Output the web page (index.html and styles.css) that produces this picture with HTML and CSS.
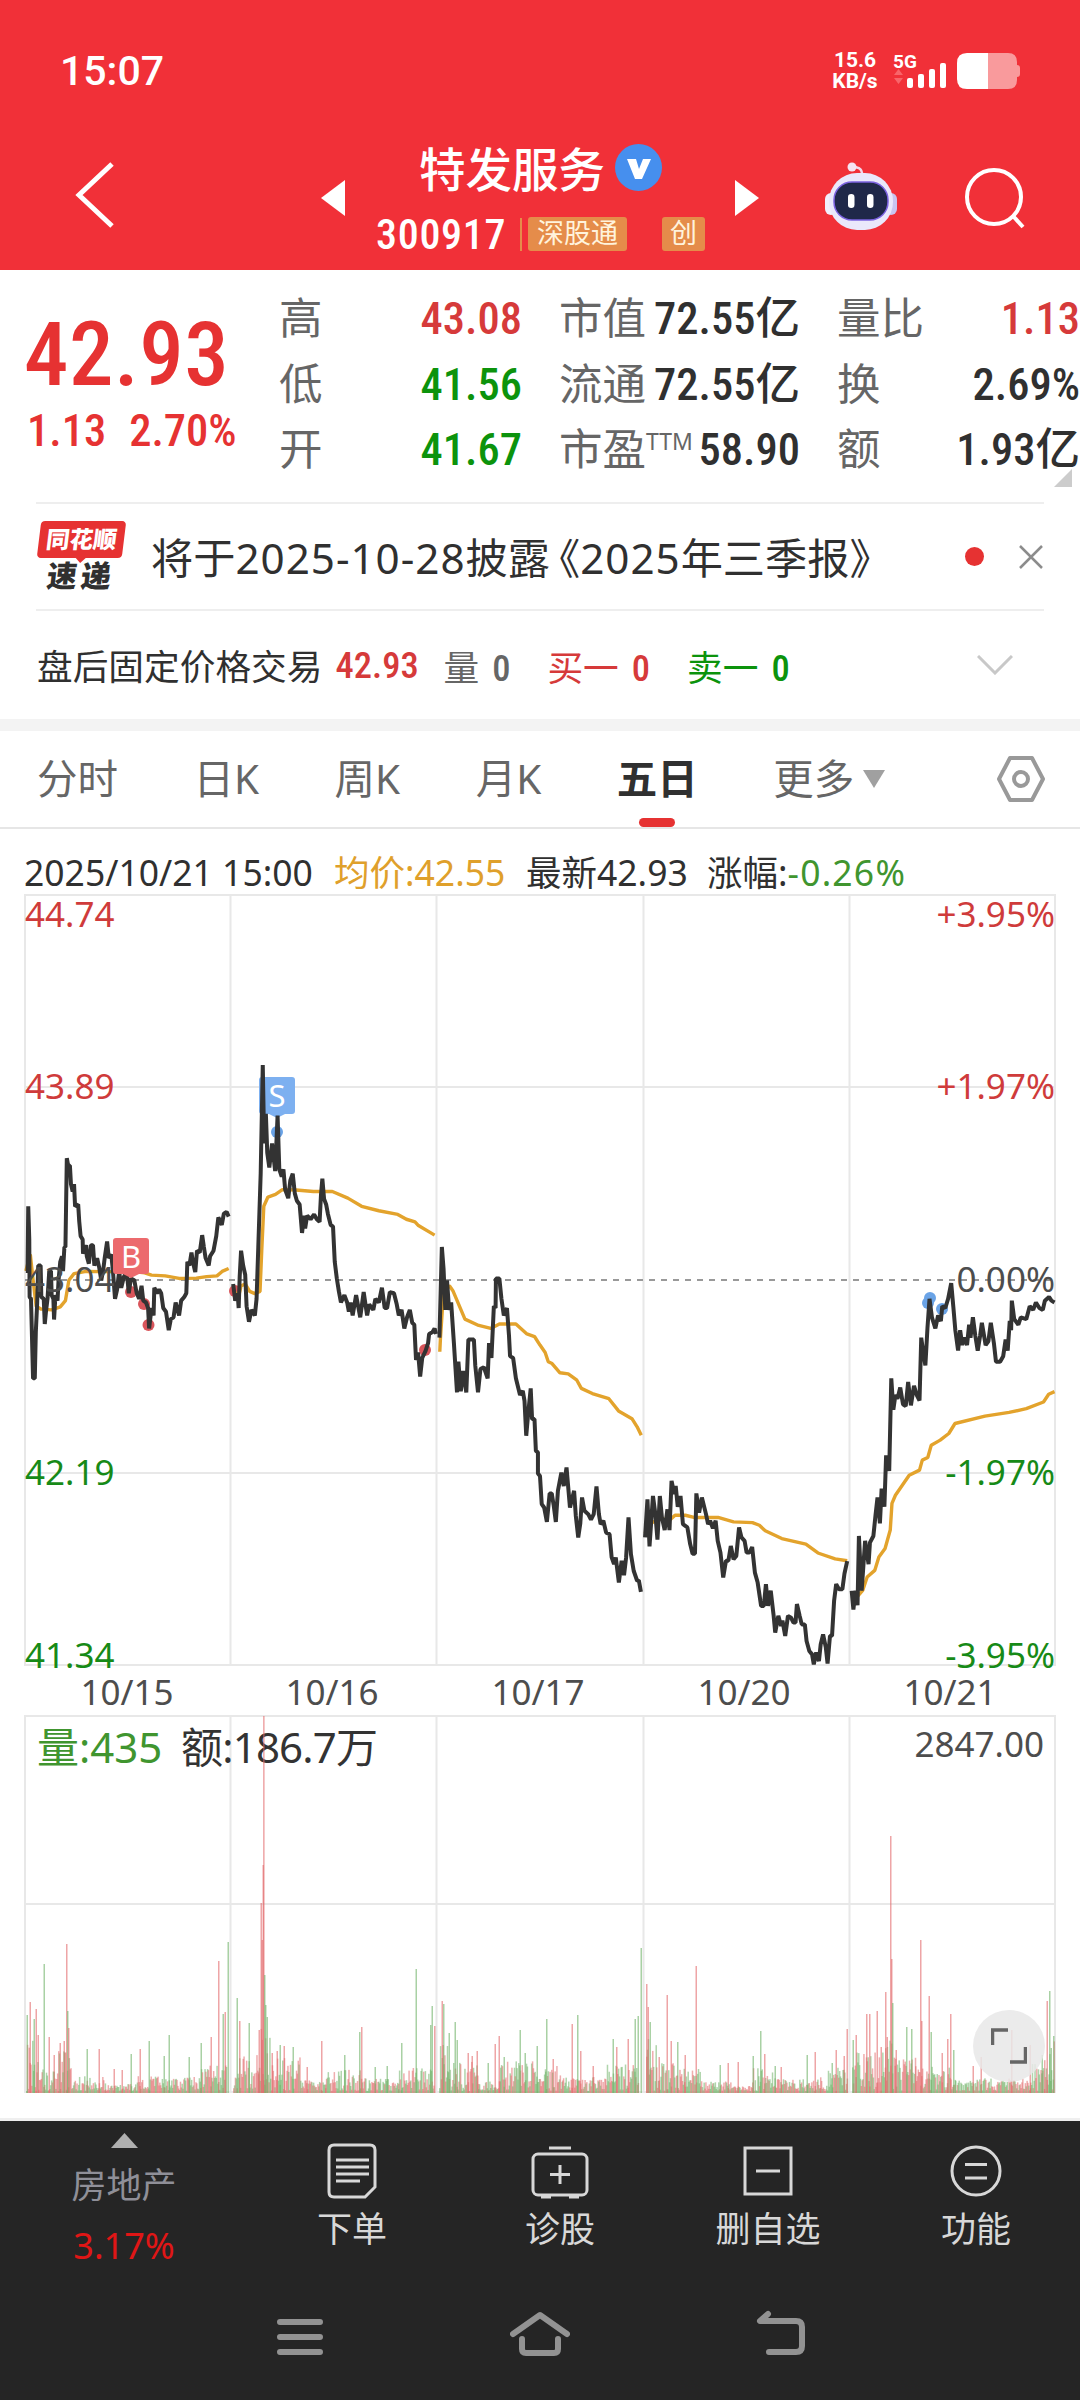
FILE: index.html
```html
<!DOCTYPE html>
<html lang="zh-CN">
<head>
    <meta charset="UTF-8">
    <meta name="viewport" content="width=device-width, initial-scale=1.0">
    <title>特发服务 300917</title>
    <link rel="stylesheet" href="styles.css">
</head>
<body>

<header class="header">
    <div class="status-bar">
        <span class="clock">15:07</span>
        <div class="status-right">
            <div class="net-speed"><span>15.6</span><span>KB/s</span></div>
            <div class="signal">
                <span class="signal-type">5G</span>
                <svg width="54" height="26" viewBox="0 0 54 26">
                    <path d="M1 12l4.500-6 4.500 6zM1 15l4.500 6 4.500-6z" fill="#f8656a"/>
                    <g fill="#fff">
                        <rect x="14" y="15" width="6" height="10" rx="2"/>
                        <rect x="25" y="11" width="6" height="14" rx="2"/>
                        <rect x="36" y="6" width="6" height="19" rx="2"/>
                        <rect x="47" y="0" width="6" height="25" rx="2"/>
                    </g>
                </svg>
            </div>
            <svg class="battery" width="64" height="36" viewBox="0 0 64 36">
                <path d="M31 0h20q9 0 9 9v3q3 0 3 3v6q0 3-3 3v3q0 9-9 9H31z" fill="#f99a9c"/>
                <path d="M31 0H10Q0 0 0 10v16q0 10 10 10h21z" fill="#fff"/>
            </svg>
        </div>
    </div>

    <div class="title-bar">
        <svg class="back" width="40" height="68" viewBox="0 0 40 68">
            <path d="M37 3L4 34l33 31" fill="none" stroke="#fff" stroke-width="5"/>
        </svg>
        <svg class="prev" width="24" height="36"><path d="M24 0v36L0 18z" fill="#fff"/></svg>
        <div class="stock">
            <div class="stock-name">
                特发服务
                <svg width="47" height="47" viewBox="0 0 47 47">
                    <circle cx="23.500" cy="23.500" r="23.500" fill="#468fee"/>
                    <path d="M12 15h9l3 10 4-10h8l-9 20h-7z" fill="#fff"/>
                </svg>
            </div>
            <div class="stock-code">
                <span class="num">300917</span>
                <i class="sep"></i>
                <span class="tag">深股通</span>
                <span class="tag tag-cyb">创</span>
            </div>
        </div>
        <svg class="next" width="24" height="36"><path d="M0 0v36l24-18z" fill="#fff"/></svg>
        <svg class="robot" width="74" height="70" viewBox="0 0 74 70">
            <path d="M38 14C39 5 32 5 28 5" fill="none" stroke="#f3d8ea" stroke-width="2.500"/>
            <circle cx="28" cy="5" r="4.500" fill="#f6e3f2"/>
            <rect x="1" y="31" width="12" height="22" rx="6" fill="#f1effc"/>
            <rect x="61" y="31" width="12" height="22" rx="6" fill="#c9c5f0"/>
            <rect x="5" y="11" width="64" height="57" rx="28" fill="#eae8fb"/>
            <rect x="10" y="20" width="54" height="38" rx="18" fill="#1f2849" stroke="#7b62e0" stroke-width="1.500"/>
            <rect x="24" y="32" width="6.500" height="14" rx="3.200" fill="#fff"/>
            <rect x="43" y="32" width="6.500" height="14" rx="3.200" fill="#fff"/>
        </svg>
        <svg class="search" width="62" height="62" viewBox="0 0 62 62">
            <circle cx="29" cy="29" r="27" fill="none" stroke="#fff" stroke-width="4"/>
            <path d="M48 48l10 11" stroke="#fff" stroke-width="4"/>
        </svg>
    </div>
</header>

<section class="quote">
    <div class="price-box">
        <div class="price num">42.93</div>
        <div class="change num"><span>1.13</span><span>2.70%</span></div>
    </div>
    <div class="stats">
        <div class="stat"><span>高</span><b class="num up">43.08</b></div>
        <div class="stat"><span>市值</span><b class="num">72.55亿</b></div>
        <div class="stat"><span>量比</span><b class="num up">1.13</b></div>
        <div class="stat"><span>低</span><b class="num down">41.56</b></div>
        <div class="stat"><span>流通</span><b class="num">72.55亿</b></div>
        <div class="stat"><span>换</span><b class="num">2.69%</b></div>
        <div class="stat"><span>开</span><b class="num down">41.67</b></div>
        <div class="stat"><span>市盈<sup>TTM</sup></span><b class="num">58.90</b></div>
        <div class="stat"><span>额</span><b class="num">1.93亿</b></div>
    </div>
    <svg class="corner" width="18" height="18"><path d="M18 0v18H0z" fill="#ccc"/></svg>
</section>

<section class="news">
    <div class="news-logo">
        <span class="logo-top">同花顺</span>
        <span class="logo-bottom">速递</span>
    </div>
    <span class="news-text">将于<span class="date">2025-10-28</span>披露<span class="book">《</span><span class="date">2025</span>年三季报》</span>
    <i class="dot"></i>
    <svg width="24" height="24" viewBox="0 0 24 24"><path d="M1 1l22 22M23 1L1 23" stroke="#8c8c8c" stroke-width="2.500"/></svg>
</section>

<section class="after-hours">
    <span class="ah-title">盘后固定价格交易</span>
    <b class="num up ah-price">42.93</b>
    <span class="ah-item gray">量<b class="num">0</b></span>
    <span class="ah-item up">买一<b class="num">0</b></span>
    <span class="ah-item down">卖一<b class="num">0</b></span>
    <svg class="fold" width="36" height="20" viewBox="0 0 36 20"><path d="M1 1l17 17L35 1" fill="none" stroke="#c8c8c8" stroke-width="3"/></svg>
</section>

<nav class="tabs">
    <span class="tab">分时</span>
    <span class="tab">日K</span>
    <span class="tab">周K</span>
    <span class="tab">月K</span>
    <span class="tab active">五日</span>
    <span class="tab">更多<svg width="22" height="18"><path d="M0 0h22L11 18z" fill="#a0a0a0"/></svg></span>
    <svg class="setting" width="50" height="48" viewBox="0 0 50 48">
        <path d="M14 3h22l11 21-11 21H14L3 24z" fill="none" stroke="#999" stroke-width="4" stroke-linejoin="round"/>
        <circle cx="25" cy="24" r="7" fill="none" stroke="#999" stroke-width="4"/>
    </svg>
</nav>

<section class="legend">
    <span class="lg-time">2025/10/21 15:00</span>
    <span class="lg-avg">均价:42.55</span>
    <span class="lg-last">最新42.93</span>
    <span>涨幅:<em>-0.26%</em></span>
</section>

<section class="charts">
    <svg class="chart" width="1080" height="1226" viewBox="0 892 1080 1226">
        <g class="grid">
            <path d="M24 895H1056M24 1087H1056M24 1473H1056M24 1665H1056"/>
            <path d="M25 895V1665M230.500 895V1665M436.500 895V1665M643.500 895V1665M849.500 895V1665M1055 895V1665"/>
            <path d="M24 1716H1056M24 1904H1056M24 2092H1056"/>
            <path d="M25 1716V2092M230.500 1716V2092M436.500 1716V2092M643.500 1716V2092M849.500 1716V2092M1055 1716V2092"/>
        </g>
        <path class="base-line" d="M25 1280H1055"/>

        <!-- buy points under the price line -->
        <g fill="#d9555b">
            <circle cx="131" cy="1292" r="6"/>
            <circle cx="144" cy="1304" r="6"/>
            <circle cx="148.500" cy="1325" r="6"/>
            <circle cx="235" cy="1291" r="6"/>
            <circle cx="425" cy="1350" r="6"/>
        </g>
        <!-- sell points -->
        <g fill="#6aa3e6">
            <circle cx="277" cy="1132" r="6"/>
            <circle cx="930" cy="1298" r="6"/>
            <circle cx="928" cy="1303" r="6"/>
            <circle cx="942" cy="1309" r="6"/>
        </g>
        <path d="M262 1077h30q3 0 3 3v31q0 3-3 3h-7l-8 4-8-4h-7q-3 0-3-3v-31q0-3 3-3z" fill="#7db0f0"/>

        <g transform="translate(0 840) scale(.34439 .37)">
            <g class="avg-line">
                <polyline points="75,1165 88,1120 95,1180 105,1260 120,1268 150,1270 175,1262 190,1245 200,1190 215,1172 250,1166 400,1168 420,1170 440,1176 480,1178 520,1185 570,1184 600,1180 630,1178 645,1166 664,1158"/>
                <polyline points="677,1225 695,1225 700,1205 712,1200 725,1220 740,1226 755,1220 760,1110 766,990 778,965 800,958 820,945 860,946 910,950 965,950 1010,968 1050,990 1100,1002 1155,1012 1180,1025 1205,1032 1215,1042 1262,1068"/>
                <polyline points="1277,1383 1279,1345 1288,1220 1305,1205 1315,1218 1350,1295 1390,1312 1425,1320 1450,1308 1498,1308 1530,1335 1552,1342 1568,1365 1583,1385 1592,1410 1603,1415 1626,1440 1650,1443 1675,1460 1688,1482 1720,1496 1768,1510 1796,1543 1835,1564 1850,1586 1862,1609"/>
                <polyline points="1873,1874 1888,1847 1920,1834 1945,1838 1960,1825 1990,1825 2015,1831 2085,1831 2130,1843 2185,1845 2205,1852 2222,1867 2270,1888 2340,1903 2375,1927 2425,1943 2460,1948"/>
                <polyline points="2475,2037 2490,2044 2505,2028 2518,1992 2540,1974 2552,1938 2570,1915 2585,1865 2590,1793 2600,1771 2640,1717 2670,1703 2678,1676 2694,1669 2704,1636 2730,1622 2755,1604 2773,1577 2860,1557 2930,1547 2980,1537 3030,1519 3045,1498 3062,1491"/>
            </g>
            <g class="price-line">
                <polyline points="75,1165 80,1165 82,990 85,1080 86,1235 90,1240 96,1455 101,1455 104,1330 108,1250 111,1150 118,1150 120,1235 127,1240 130,1308 134,1270 138,1240 143,1165 148,1165 150,1230 155,1240 157,1296 161,1230 167,1245 170,1190 175,1140 180,1125 183,1165 187,1100 190,1100 194,860 198,880 203,880 206,930 211,950 215,930 218,990 227,985 230,1030 234,1070 240,1080 241,1118 250,1095 252,1125 258,1145 264,1095 270,1095 274,1150 282,1130 288,1155 294,1190 300,1160 304,1130 311,1085 316,1130 323,1120 328,1165 334,1240 340,1215 346,1165 352,1210 360,1180 368,1165 374,1225 380,1185 390,1190 397,1225 404,1240 411,1205 416,1245 424,1250 430,1265 433,1320 440,1265 446,1285 448,1210 456,1225 462,1215 468,1225 474,1265 482,1275 490,1325 496,1295 504,1290 510,1250 520,1285 526,1245 535,1235 541,1225 544,1140 550,1150 556,1115 560,1140 567,1168 572,1110 580,1115 587,1068 592,1100 597,1130 606,1150 610,1125 620,1110 628,1070 634,1020 644,1040 650,1010 658,1005 664,1018"/>
                <polyline points="677,1200 683,1245 690,1225 693,1265 696,1180 700,1110 706,1150 712,1175 716,1260 723,1302 730,1270 740,1285 745,1240 750,1100 757,900 763,608 767,820 772,740 776,845 782,885 790,820 799,895 806,745 811,890 818,910 823,890 828,945 837,968 843,920 850,902 856,955 862,975 870,985 877,1062 883,1015 886,1050 892,1015 902,1025 912,1012 920,1025 928,1032 932,960 936,915 941,970 947,985 952,1010 960,1040 967,1045 972,1140 978,1185 984,1220 990,1250 1000,1230 1008,1250 1013,1275 1018,1250 1024,1285 1034,1230 1046,1290 1056,1222 1066,1285 1072,1255 1084,1270 1090,1240 1100,1250 1109,1210 1117,1265 1124,1265 1132,1222 1144,1225 1152,1255 1158,1285 1166,1270 1174,1320 1182,1290 1190,1270 1197,1305 1203,1310 1208,1405 1214,1385 1220,1450 1226,1400 1236,1380 1243,1360 1246,1335 1256,1330 1262,1320 1266,1335"/>
                <polyline points="1276,1345 1283,1100 1288,1160 1293,1270 1298,1190 1304,1270 1310,1250 1318,1360 1327,1493 1331,1410 1338,1490 1345,1435 1354,1493 1360,1350 1376,1350 1380,1420 1388,1493 1395,1430 1405,1425 1416,1455 1420,1360 1427,1400 1434,1260 1439,1265 1440,1185 1450,1185 1456,1240 1463,1285 1472,1265 1478,1340 1481,1395 1490,1400 1498,1455 1510,1500 1518,1489 1523,1516 1528,1610 1534,1547 1541,1482 1545,1565 1552,1565 1556,1651 1562,1655 1562,1712 1568,1719 1573,1795 1580,1804 1588,1843 1596,1766 1602,1766 1608,1800 1614,1843 1620,1759 1630,1710 1637,1746 1645,1696 1655,1804 1667,1759 1672,1827 1679,1885 1685,1847 1690,1777 1697,1813 1708,1822 1716,1837 1724,1822 1732,1747 1739,1822 1744,1849 1752,1840 1760,1872 1770,1876 1776,1939 1783,1957 1788,1939 1797,2007 1805,1948 1812,1987 1818,1939 1825,1831 1832,1930 1840,1975 1850,2002 1855,2001 1861,2032"/>
                <polyline points="1873,1885 1880,1782 1886,1909 1896,1773 1903,1822 1909,1891 1916,1773 1922,1831 1930,1865 1938,1809 1944,1865 1950,1732 1958,1768 1962,1746 1968,1802 1976,1773 1983,1849 1996,1858 2004,1903 2011,1929 2018,1929 2022,1766 2030,1818 2038,1777 2050,1822 2056,1849 2062,1840 2070,1860 2078,1840 2084,1894 2092,1926 2100,1993 2108,1948 2115,1948 2122,1908 2130,1944 2138,1935 2146,1858 2153,1885 2162,1894 2168,1926 2176,1926 2184,1911 2192,1980 2200,2007 2210,2070 2218,2070 2224,2011 2230,2070 2238,2029 2246,2093 2251,2142 2260,2097 2268,2124 2272,2110 2280,2151 2288,2097 2297,2102 2304,2115 2310,2115 2314,2065 2322,2097 2328,2120 2337,2120 2342,2165 2350,2192 2358,2201 2363,2228 2370,2196 2378,2219 2383,2174 2390,2147 2398,2183 2403,2226 2410,2151 2416,2151 2422,2056 2428,2011 2436,2025 2446,2025 2452,1983 2460,1949"/>
                <polyline points="2473,2029 2478,2080 2484,2029 2490,2068 2494,1881 2502,2029 2512,1894 2522,1957 2526,1899 2536,1881 2542,1827 2548,1777 2555,1847 2560,1753 2568,1802 2573,1663 2582,1705 2588,1455 2594,1540 2600,1500 2606,1510 2614,1480 2622,1525 2630,1530 2637,1465 2645,1528 2654,1475 2662,1500 2670,1515 2675,1345 2680,1380 2687,1420 2693,1320 2699,1240 2706,1290 2716,1320 2724,1285 2732,1300 2736,1260 2745,1265 2753,1240 2762,1198 2768,1260 2774,1325 2782,1380 2788,1325 2794,1365 2800,1345 2808,1365 2814,1310 2818,1345 2825,1290 2832,1340 2839,1380 2846,1340 2851,1305 2862,1365 2870,1355 2877,1305 2886,1360 2892,1410 2904,1410 2913,1395 2920,1350 2926,1380 2932,1300 2936,1325 2938,1245 2945,1295 2957,1310 2964,1290 2980,1295 2990,1260 3000,1270 3008,1250 3018,1265 3028,1270 3034,1245 3046,1235 3053,1245 3062,1250"/>
            </g>
        </g>

        <path d="M116 1238h30q3 0 3 3v30q0 3-3 3h-7l-8 4-8-4h-7q-3 0-3-3v-30q0-3 3-3z" fill="#ec6a6d"/>
        <text x="131" y="1268" class="mark">B</text>
        <text x="277" y="1107" class="mark">S</text>

        <g class="axis">
            <text x="25" y="927" class="t-up">44.74</text>
            <text x="25" y="1099" class="t-up">43.89</text>
            <text x="25" y="1292">43.04</text>
            <text x="25" y="1485" class="t-down">42.19</text>
            <text x="25" y="1668" class="t-down">41.34</text>
        </g>
        <g class="axis right">
            <text x="1055" y="927" class="t-up">+3.95%</text>
            <text x="1055" y="1099" class="t-up">+1.97%</text>
            <text x="1055" y="1292">0.00%</text>
            <text x="1055" y="1485" class="t-down">-1.97%</text>
            <text x="1055" y="1668" class="t-down">-3.95%</text>
        </g>
        <g class="axis dates">
            <text x="127" y="1705">10/15</text>
            <text x="332" y="1705">10/16</text>
            <text x="538" y="1705">10/17</text>
            <text x="744" y="1705">10/20</text>
            <text x="950" y="1705">10/21</text>
        </g>

        <text x="37" y="1763" class="vol-text t-vol">量:435</text>
        <text x="181" y="1763" class="vol-text amount">额:186.7万</text>
        <text x="1044" y="1757" class="vol-max">2847.00</text>
        <g id="volume"></g>
    </svg>
    <button class="expand">
        <svg width="36" height="36" viewBox="0 0 36 36"><path d="M1.500 17V2H17M19 34h15.500V19" fill="none" stroke="#666" stroke-width="3.500"/></svg>
    </button>
</section>

<footer class="footer">
    <div class="menu">
        <div class="sector">
            <svg width="27" height="15"><path d="M13.500 0L27 15H0z" fill="#b0b0b0"/></svg>
            <span class="sector-name">房地产</span>
            <span class="sector-rate">3.17%</span>
        </div>
        <div class="menu-item">
            <svg width="58" height="58" viewBox="0 0 58 58">
                <path d="M11 3h36q5 0 5 5v37L42 55H11q-5 0-5-5V8q0-5 5-5zM13 18h33M13 25h33M13 32h33M13 39h24"/>
            </svg>
            <span>下单</span>
        </div>
        <div class="menu-item">
            <svg width="58" height="58" viewBox="0 0 58 58">
                <rect x="2" y="12" width="54" height="41" rx="5"/>
                <path d="M18 6h22M29 23v19M19 32.500h20M10 55h10M38 55h10"/>
            </svg>
            <span>诊股</span>
        </div>
        <div class="menu-item">
            <svg width="58" height="58" viewBox="0 0 58 58"><path d="M6 6h46v46H6zM17 29h24"/></svg>
            <span>删自选</span>
        </div>
        <div class="menu-item">
            <svg width="58" height="58" viewBox="0 0 58 58"><circle cx="29" cy="29" r="24"/><path d="M18 22.500h22M18 36h22"/></svg>
            <span>功能</span>
        </div>
    </div>
    <div class="system-nav">
        <svg width="60" height="46" viewBox="0 0 60 46"><path d="M10 12h40M10 27h40M10 42h40"/></svg>
        <svg width="60" height="46" viewBox="0 0 60 46"><path d="M3 24L30 5l27 19M12 29v10q0 4 4 4h28q4 0 4-4V29"/></svg>
        <svg width="60" height="46" viewBox="0 0 60 46"><path d="M18 4l-8 7h36q6 0 6 6v19q0 6-6 6H19"/></svg>
    </div>
</footer>

<script>
    const BOTTOM = 2093;
    const RED = '#e2696b';
    const GREEN = '#6fb267';

    // [x, height, 'r' | 'g'] for the minutes that stand out
    const peaks = [
        [27, 78, 'g'], [30, 91, 'r'], [34, 74, 'g'], [36, 84, 'r'], [38, 58, 'r'], [44, 129, 'g'], [49, 56, 'r'], [54, 38, 'r'], [60, 50, 'r'],
        [64, 52, 'r'], [66.5, 149, 'r'], [67.500, 82, 'g'], [68.500, 65, 'r'], [87, 44, 'g'], [99, 44, 'r'], [114, 24, 'r'], [122, 23, 'r'], [131, 39, 'g'],
        [140, 44, 'r'], [149, 52, 'g'], [164, 37, 'g'], [169, 58, 'g'], [189, 36, 'g'], [201, 50, 'g'], [211, 56, 'r'], [218.500, 132, 'r'], [223, 79, 'g'],
        [225, 81, 'r'], [228, 151, 'g'], [237, 95, 'g'], [239.500, 72, 'r'], [249, 70, 'g'], [259, 63, 'r'], [261, 190, 'r'], [262, 153, 'r'],
        [263, 228, 'r'], [263.600, 377, 'r'], [264.500, 118, 'g'], [265.500, 88, 'g'], [267, 76, 'g'], [272, 40, 'r'], [277, 42, 'r'], [280, 48, 'g'], [284, 47, 'r'],
        [293, 46, 'g'], [307, 26, 'r'], [321.500, 52, 'r'], [344.500, 38, 'g'], [359.500, 61, 'g'], [361.500, 66, 'r'], [375, 26, 'g'], [387, 27, 'g'],
        [401.500, 50, 'g'], [416, 124, 'g'], [430.500, 68, 'g'], [432, 87, 'g'], [434.500, 67, 'r'], [442, 92, 'r'], [443.500, 89, 'g'],
        [449, 60, 'g'], [455, 71, 'g'], [457, 53, 'g'], [468, 40, 'r'], [472, 37, 'r'], [477, 42, 'r'], [488, 30, 'g'], [495, 49, 'r'], [499, 57, 'r'],
        [504, 36, 'g'], [520, 63, 'g'], [525, 40, 'g'], [537, 47, 'g'], [546.500, 74, 'g'], [553, 34, 'r'], [572, 69, 'r'], [577.500, 78, 'g'], [580.500, 42, 'r'],
        [593, 27, 'r'], [613, 54, 'g'], [616.500, 46, 'r'], [628, 54, 'r'], [635, 74, 'g'], [638, 77, 'g'], [641, 145, 'g'], [646.500, 109, 'r'], [648, 86, 'r'],
        [650, 71, 'g'], [659, 36, 'r'], [667, 98, 'r'], [671, 52, 'r'], [677.500, 51, 'g'], [685, 38, 'r'], [696, 127, 'r'], [720, 28, 'g'],
        [728, 30, 'r'], [738, 31, 'r'], [753, 37, 'g'], [760.500, 62, 'g'], [764.500, 39, 'r'], [775, 27, 'g'], [781, 26, 'r'], [807, 38, 'g'],
        [815, 41, 'r'], [832, 30, 'g'], [836, 43, 'r'], [844, 37, 'r'], [847, 64, 'r'], [853, 53, 'g'], [856, 58, 'r'], [866.500, 79, 'r'],
        [869.500, 79, 'r'], [877, 82, 'r'], [881, 46, 'r'], [885.500, 101, 'r'], [887, 56, 'r'], [890.500, 257, 'r'], [891.500, 134, 'r'],
        [892.500, 90, 'g'], [896, 43, 'r'], [906.500, 66, 'g'], [911.500, 64, 'g'], [920.500, 153, 'r'], [921.500, 72, 'r'], [929, 97, 'r'], [931, 61, 'g'],
        [942, 40, 'r'], [947.500, 54, 'r'], [950.500, 79, 'r'], [953.500, 43, 'g'], [973, 27, 'r'], [981, 36, 'r'], [1011.500, 63, 'r'], [1030, 48, 'r'],
        [1042, 38, 'g'], [1047, 92, 'r'], [1049.500, 102, 'g'], [1051, 45, 'g'], [1053.500, 57, 'g']
    ];

    // background level of the bars: [from x, to x, height]
    const levels = [
        [26, 38, 56], [38, 58, 26], [58, 66, 40], [66, 72, 38], [72, 105, 15], [105, 135, 7], [135, 200, 15], [200, 226, 26],
        [233, 258, 38], [258, 270, 66], [270, 300, 34], [300, 325, 11], [325, 360, 22], [360, 398, 13], [398, 434, 24],
        [439, 447, 52], [447, 478, 30], [478, 500, 10], [500, 545, 30], [545, 562, 26], [562, 605, 14], [605, 638, 28],
        [646, 656, 52], [656, 684, 30], [684, 700, 22], [700, 735, 10], [735, 752, 5], [752, 775, 23], [775, 820, 12], [820, 847, 24],
        [852, 885, 40], [885, 895, 54], [895, 915, 36], [915, 955, 25], [955, 1030, 13], [1030, 1044, 28], [1044, 1054, 52]
    ];

    let seed = 17;
    function random() {
        seed = (seed * 16807) % 2147483647;
        return seed / 2147483647;
    }

    function drawBar(x, height, color, opacity) {
        const bar = document.createElementNS('http://www.w3.org/2000/svg', 'rect');
        bar.setAttribute('x', x);
        bar.setAttribute('y', BOTTOM - height);
        bar.setAttribute('width', 1.5);
        bar.setAttribute('height', height);
        bar.setAttribute('fill', color);
        bar.setAttribute('fill-opacity', opacity);
        document.getElementById('volume').appendChild(bar);
    }

    levels.forEach(([from, to, level]) => {
        for (let x = from; x < to; x += 0.86) {
            const height = 2 + level * Math.pow(random(), 1.15);
            drawBar(x, height, random() > 0.5 ? RED : GREEN, 0.55);
        }
    });
    peaks.forEach(([x, height, side]) => drawBar(x - 0.5, height, side === 'r' ? RED : GREEN, 0.6));
</script>

</body>
</html>
```

FILE: styles.css
```css
* {
    box-sizing: border-box;
}

body {
    margin: 0;
    width: 1080px;
    height: 2400px;
    overflow: hidden;
    background: #fff;
    color: #303030;
    font-family: "Noto Sans", "Noto Sans CJK SC", sans-serif;
    display: flex;
    flex-direction: column;
}

svg {
    display: block;
    flex: none;
}

.num {
    font-family: Roboto, "Noto Sans CJK SC", sans-serif;
    font-weight: 500;
    font-stretch: 85%;
}

.up {
    color: #d63a3a;
}

.down {
    color: #0c930c;
}

.gray {
    color: #666;
}

/* header */
.header {
    height: 270px;
    background: #f13038;
    color: #fff;
}

.status-bar {
    height: 142px;
    padding: 0 60px 0 60px;
    display: flex;
    justify-content: space-between;
    align-items: center;
}

.clock {
    font: 500 41px/1 Roboto, sans-serif;
}

.status-right {
    display: flex;
    align-items: center;
}

.net-speed {
    width: 60px;
    display: flex;
    flex-direction: column;
    align-items: center;
    margin-right: 8px;
    font: 700 21px/21px Roboto, sans-serif;
}

.signal {
    height: 36px;
    width: 60px;
    position: relative;
    display: flex;
    align-items: flex-end;
}

.signal-type {
    position: absolute;
    left: 0;
    top: 0;
    font: 700 19px/17px Roboto, sans-serif;
}

.battery {
    margin-left: 4px;
    margin-right: -1px;
}

.title-bar {
    height: 128px;
    display: flex;
    align-items: flex-start;
}

.back {
    margin: 19px 0 0 75px;
}

.prev {
    margin: 38px 0 0 206px;
}

.next {
    margin: 38px 0 0 20px;
}

.stock {
    width: 370px;
    padding-left: 31px;
}

.stock-name {
    height: 50px;
    padding-left: 43px;
    display: flex;
    align-items: center;
    gap: 10px;
    font-size: 46.500px;
    font-weight: 500;
    white-space: nowrap;
}

.stock-code {
    margin-top: 17px;
    height: 50px;
    display: flex;
    align-items: center;
}

.stock-code .num {
    width: 144px;
    font-size: 42px;
    letter-spacing: 0.700px;
}

.sep {
    width: 2px;
    height: 33px;
    background: #e58c4a;
    margin-right: 6px;
}

.tag {
    height: 34px;
    padding: 0 9px;
    border-radius: 3px;
    background: #e58c4a;
    color: #fff3dc;
    font-size: 27px;
    line-height: 32px;
    white-space: nowrap;
}

.tag-cyb {
    margin-left: 35px;
    padding: 0 8px;
}

.robot {
    margin: 20px 0 0 65px;
}

.search {
    margin: 26px 0 0 67px;
}

/* quote */
.quote {
    height: 232px;
    position: relative;
    display: flex;
}

.price-box {
    width: 281px;
    padding: 34px 0 0 24px;
    color: #e63232;
}

.price {
    height: 101px;
    line-height: 102px;
    font-size: 89px;
    letter-spacing: 0.500px;
}

.change {
    display: flex;
    gap: 23px;
    padding-left: 3px;
    line-height: 52px;
    font-size: 44.500px;
}

.stats {
    padding-top: 17px;
    display: grid;
    grid-template-columns: 241px 239px 241px;
    column-gap: 39px;
    grid-auto-rows: 65.500px;
}

.stat {
    display: flex;
    justify-content: space-between;
    align-items: baseline;
    font-size: 43.500px;
    line-height: 61px;
    color: #666;
    white-space: nowrap;
}

.stat span {
    margin-left: -2px;
}

.stat b {
    font-size: 44.500px;
    color: #303030;
}

.stat b.up {
    color: #d63a3a;
}

.stat b.down {
    color: #0c930c;
}

.stat sup {
    font-size: 23px;
    line-height: 1;
    vertical-align: 15px;
}

.corner {
    position: absolute;
    right: 8px;
    bottom: 15px;
}

/* news */
.news {
    height: 109px;
    margin: 0 36px;
    border-top: 2px solid #eee;
    border-bottom: 2px solid #eee;
    display: flex;
    align-items: center;
}

.news-logo {
    width: 88px;
    margin: 0 26px 0 1px;
    display: flex;
    flex-direction: column;
    align-items: center;
    font-weight: 900;
}

.logo-top {
    position: relative;
    width: 85px;
    height: 37px;
    border-radius: 4px;
    background: #e63232;
    color: #fff;
    font-size: 23.500px;
    line-height: 36px;
    text-align: center;
    transform: skewX(-7deg);
}

.logo-top::after {
    content: "";
    position: absolute;
    left: 38px;
    top: 36px;
    border: 6px solid transparent;
    border-top-color: #e63232;
    border-bottom: none;
}

.logo-bottom {
    height: 34px;
    margin-top: 1px;
    font-size: 30px;
    line-height: 34px;
    letter-spacing: 4px;
    transform: skewX(-7deg);
}

.news-text {
    width: 778px;
    padding-bottom: 3px;
    font-size: 42.200px;
    white-space: nowrap;
}

.date {
    letter-spacing: 1px;
}

.book {
    margin-left: -12px;
}

.dot {
    width: 19px;
    height: 19px;
    margin: 0 35px 0 36px;
    border-radius: 50%;
    background: #e63232;
}

/* after hours */
.after-hours {
    height: 108px;
    padding: 0 67px 0 37px;
    display: flex;
    align-items: center;
    font-size: 35.700px;
    white-space: nowrap;
}

.ah-title {
    padding-bottom: 1px;
}

.ah-price {
    width: 121px;
    padding-left: 13px;
    font-size: 36.500px;
}

.ah-item {
    margin-right: 37px;
}

.ah-item .num {
    margin-left: 13px;
    font-size: 36.500px;
}

.fold {
    margin-left: auto;
}

/* period tabs */
.tabs {
    height: 110px;
    border-top: 12px solid #f3f3f3;
    border-bottom: 2px solid #e6e6e6;
    padding: 0 34px 0 37px;
    display: flex;
    align-items: center;
    font-size: 40.500px;
    color: #666;
    white-space: nowrap;
}

.tab {
    height: 96px;
    line-height: 96px;
    margin-right: 75.500px;
    display: flex;
    align-items: center;
    gap: 9px;
}

.tab.active {
    position: relative;
    color: #303030;
    font-weight: 700;
}

.tab.active::after {
    content: "";
    position: absolute;
    left: 50%;
    bottom: 0;
    width: 36px;
    height: 9px;
    margin-left: -18px;
    border-radius: 5px;
    background: #e63232;
}

.setting {
    margin-left: auto;
}

/* chart */
.legend {
    height: 63px;
    padding: 15px 0 0 24px;
    display: flex;
    font-size: 35.500px;
    line-height: 57px;
    white-space: nowrap;
}

.lg-time {
    width: 310px;
}

.lg-avg {
    width: 192px;
    color: #dfa02b;
}

.lg-last {
    width: 181px;
}

.legend em {
    font-style: normal;
    letter-spacing: 1.200px;
    color: #40952f;
}

.charts {
    position: relative;
    height: 1229px;
    border-bottom: 3px solid #efefef;
    flex: none;
}

.grid path {
    fill: none;
    stroke: #e8e8e8;
    stroke-width: 2;
}

.base-line {
    stroke: #999;
    stroke-width: 2;
    stroke-dasharray: 6 6;
}

.avg-line polyline,
.price-line polyline {
    fill: none;
    stroke: #e3a32c;
    stroke-width: 3.400;
    vector-effect: non-scaling-stroke;
    stroke-linejoin: bevel;
}

.price-line polyline {
    stroke: #333;
    stroke-width: 4;
}

.axis text,
.vol-max {
    font-size: 35px;
    fill: #4d4d4d;
}

.axis .t-up {
    fill: #cf3b3b;
}

.axis .t-down {
    fill: #178a17;
}

.right text,
.vol-max {
    text-anchor: end;
}

.dates text,
.mark {
    text-anchor: middle;
}

.mark {
    font-size: 31px;
    fill: #fff;
}

.vol-text {
    font-size: 42px;
    fill: #333;
}

.amount {
    letter-spacing: -0.800px;
}

.t-vol {
    fill: #40952f;
}

.expand {
    position: absolute;
    left: 973px;
    top: 1118px;
    width: 72px;
    height: 72px;
    padding: 0;
    border: none;
    border-radius: 50%;
    background: rgba(232, 232, 232, 0.85);
    display: flex;
    justify-content: center;
    align-items: center;
}

/* footer */
.footer {
    flex: 1;
    background: #252525;
}

.menu {
    height: 150px;
    display: flex;
    color: #d8d8d8;
    font-size: 35px;
}

.sector {
    width: 248px;
    padding-top: 12px;
    display: flex;
    flex-direction: column;
    align-items: center;
}

.sector-name {
    margin-top: 13px;
    line-height: 48px;
    color: #8f8f98;
}

.sector-rate {
    margin-top: 10px;
    font-size: 36px;
    line-height: 54px;
    color: #e01616;
}

.menu-item {
    width: 208px;
    padding-top: 21px;
    display: flex;
    flex-direction: column;
    align-items: center;
}

.menu-item svg {
    fill: none;
    stroke: #d8d8d8;
    stroke-width: 3;
}

.menu-item span {
    margin-top: 4px;
    line-height: 50px;
}

.system-nav {
    height: 129px;
    padding: 39px 270px 0;
    display: flex;
    justify-content: space-between;
}

.system-nav svg {
    fill: none;
    stroke: #929292;
    stroke-width: 6;
    stroke-linecap: round;
    stroke-linejoin: round;
}
```
